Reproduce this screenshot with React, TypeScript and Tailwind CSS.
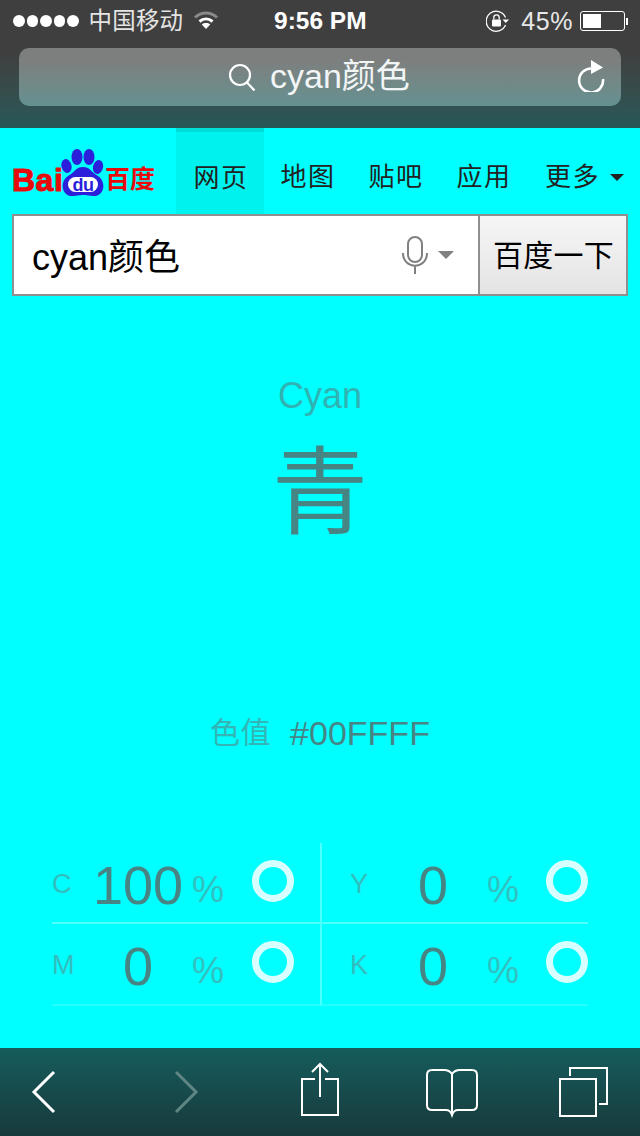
import React from "react";

const SANS = "font-['Liberation_Sans','Noto_Sans_CJK_SC',sans-serif]";

function StatusBar() {
  return (
    <div className="flex h-[40px] items-center justify-between pl-[13px] pr-[12px] pt-[2px] text-white">
      <div className="flex w-[210px] items-center">
        <div className="flex gap-[2px]">
          {[0, 1, 2, 3, 4].map((i) => (
            <span key={i} className="h-[11.5px] w-[11.5px] rounded-full bg-white" />
          ))}
        </div>
        <span className="ml-[10px] pt-[1px] text-[23.5px] leading-none tracking-[0.2px] text-[#e4e4e4]">中国移动</span>
        <svg width="26" height="20" viewBox="0 0 26 20" className="mb-[2px] ml-[10px]" fill="none">
          <path d="M2 7.500C8.500 1.500 17.500 1.500 24 7.500" stroke="#8a8a8a" strokeWidth="3" />
          <path d="M6.500 11.500C10.500 8 15.500 8 19.500 11.500" stroke="#fff" strokeWidth="3" />
          <path d="M13 19L8.800 14.500C11 12.600 15 12.600 17.200 14.500Z" fill="#fff" />
        </svg>
      </div>
      <span className="ml-[51px] text-[24.5px] font-bold leading-none">9:56 PM</span>
      <div className="ml-auto flex items-center">
        <svg width="24" height="22" viewBox="0 0 24 22" fill="none" className="ml-[1px]">
          <path d="M19.500 7.500A10 10 0 1 0 19.500 15" stroke="#fff" strokeWidth="1.300" />
          <path d="M16.500 9.500H23L19.800 13Z" fill="#fff" />
          <rect x="6" y="9.500" width="9" height="7" rx="1" fill="#fff" />
          <path d="M7.800 9.500V7.500A2.700 2.700 0 0 1 13.200 7.500V9.500" stroke="#fff" strokeWidth="1.300" />
        </svg>
        <span className="ml-[11px] text-[25px] leading-none tracking-[0.6px] text-[#e8e8e8]">45%</span>
        <div className="ml-[7px] flex items-center">
          <div className="h-[20px] w-[45px] rounded-[3px] border border-white p-[2px]">
            <div className="h-full w-[18px] bg-white" />
          </div>
          <div className="ml-[1px] h-[7px] w-[2px] bg-white" />
        </div>
      </div>
    </div>
  );
}

function AddressBar() {
  return (
    <div className="mx-[19px] mt-[8px] flex h-[58px] items-center rounded-[10px] bg-gradient-to-b from-[#7d7f7e] from-20% to-[#649191] pl-[209px] pr-[16px] text-white">
      <svg width="28" height="30" viewBox="0 0 28 30" fill="none" stroke="#fff" strokeWidth="2.200">
        <circle cx="12" cy="13" r="10" />
        <path d="M19 20.500L26.500 28.500" />
      </svg>
      <span className="mb-[3px] ml-[14px] text-[34px] leading-none text-[#f2f5f5]">cyan颜色</span>
      <svg width="28" height="32" viewBox="0 0 28 32" fill="none" className="mb-[3px] ml-auto">
        <path d="M15 8.500A12 12 0 1 0 26 19" stroke="#fff" strokeWidth="2.600" />
        <path d="M14 0L26 7.500L14 14Z" fill="#fff" />
      </svg>
    </div>
  );
}

function BaiduLogo() {
  return (
    <div className="relative h-[48px] w-[144px]">
      <span className="absolute left-0 top-[15px] text-[32px] font-bold leading-none tracking-[0.5px] text-[#e80b0b] [-webkit-text-stroke:1px_#e80b0b]">Bai</span>
      <span className="absolute left-[93px] top-[18px] text-[25px] font-bold leading-none text-[#e80b0b]">百度</span>
      <svg width="46" height="48" viewBox="0 0 46 48" className="absolute left-[49px] top-0" fill="#2b1fdc">
        <ellipse cx="5.500" cy="17" rx="5" ry="7" transform="rotate(-15 5.500 17)" />
        <ellipse cx="16" cy="8" rx="5.500" ry="8" />
        <ellipse cx="28" cy="8" rx="5.500" ry="8" />
        <ellipse cx="37" cy="18" rx="5" ry="7" transform="rotate(15 37 18)" />
        <path d="M22 18C29 18 30 23 37 27C46 33 43 47 33 47C28 47 26 46 22 46C18 46 16 47 11 47C1 47 -2 33 7 27C14 23 15 18 22 18Z" />
      </svg>
      <span className="absolute left-[56px] top-[28px] flex h-[15px] w-[30px] items-center justify-center rounded-full bg-white text-[18px] font-bold leading-none tracking-[-0.5px] text-[#2b1fdc]">
        du
      </span>
    </div>
  );
}

function NavBar() {
  const tabs = ["网页", "地图", "贴吧", "应用"];
  return (
    <div className="flex h-[86px] pl-[12px]">
      <div className="flex w-[164px] flex-col justify-end pb-[17px]">
        <BaiduLogo />
      </div>
      {tabs.map((t, i) => (
        <div
          key={t}
          className={
            i === 0
              ? "flex w-[88px] items-center justify-center border-t-[4px] border-[#00dcd8] bg-[#00f2ee] pl-[2px] pt-[10px] text-[26px] tracking-[1.500px] text-[#222]"
              : "flex w-[88px] items-center justify-center pt-[12px] text-[26px] tracking-[1.500px] text-[#222]"
          }
        >
          {t}
        </div>
      ))}
      <div className="ml-[17px] flex items-center pt-[12px] text-[26px] tracking-[1.500px] text-[#222]">
        更多
        <span className="ml-[10px] h-0 w-0 border-x-[7px] border-t-[7px] border-x-transparent border-t-[#222]" />
      </div>
    </div>
  );
}

function SearchForm() {
  return (
    <div className="mx-[12px] flex h-[82px] border-2 border-[#8f8f8f]">
      <div className="flex flex-1 items-center bg-white pl-[18px] pr-[24px]">
        <span className="pt-[5px] text-[36px] leading-none text-black">cyan颜色</span>
        <svg width="26" height="38" viewBox="0 0 26 38" fill="none" stroke="#808080" strokeWidth="2" className="ml-auto">
          <rect x="6" y="1" width="14" height="25" rx="7" />
          <path d="M1 17C1 34 25 34 25 17M13 30V38" />
        </svg>
        <span className="ml-[10px] h-0 w-0 border-x-[8px] border-t-[8px] border-x-transparent border-t-[#808080]" />
      </div>
      <div className="flex w-[148px] items-center justify-center border-l-2 border-[#8f8f8f] bg-gradient-to-b from-[#f6f6f6] to-[#e4e4e4] pl-[1px] pt-[2px] text-[30px] leading-none tracking-[0.2px] text-black">
        百度一下
      </div>
    </div>
  );
}

function CmykCell({ label, value, right, bottom }: { label: string; value: string; right?: boolean; bottom?: boolean }) {
  return (
    <div
      className={
        (right ? "pl-[28px] " : "border-r-2 border-[#4dffff] ") +
        (bottom ? "h-[82px] border-b-[#26ffff] " : "h-[81px] border-b-[#4dffff] ") +
        "flex items-center border-b-2 pt-[4px]"
      }
    >
      <span className={(right ? "w-[37px] " : "w-[40px] ") + "pb-[1px] text-[27px] leading-none text-[#33bdbd]"}>{label}</span>
      <span className="w-[92px] text-center text-[54px] leading-none text-[#478585]">{value}</span>
      <span className={(right ? "ml-[8px] w-[59px] " : "ml-[8px] w-[60px] ") + "pt-[10px] text-[36px] leading-none text-[#33c0c0]"}>%</span>
      <span className="mb-[8px] h-[42px] w-[42px] rounded-full border-[7px] border-[#d8ffff]" />
    </div>
  );
}

export default function App() {
  return (
    <div className={`flex h-[1136px] w-[640px] flex-col overflow-hidden bg-[#00ffff] ${SANS}`}>
      <div className="h-[128px] bg-gradient-to-b from-[#3f3f3f] from-40% to-[#275858]">
        <StatusBar />
        <AddressBar />
      </div>
      <NavBar />
      <SearchForm />

      <div className="mt-[79px] text-center text-[36px] leading-[42px] text-[#2fb3b3]">Cyan</div>
      <div className="mt-[20px] text-center text-[96px] leading-[112px] text-[#478585]">青</div>
      <div className="mt-[164px] flex items-center justify-center text-[34px] leading-[40px]">
        <span className="text-[30px] tracking-[0.500px] text-[#33b5b5]">色值</span>
        <span className="ml-[19px] text-[#478585]">#00FFFF</span>
      </div>

      <div className="mx-[52px] mt-[90px] grid h-[163px] grid-cols-[270px_1fr]">
        <CmykCell label="C" value="100" />
        <CmykCell label="Y" value="0" right />
        <CmykCell label="M" value="0" bottom />
        <CmykCell label="K" value="0" right bottom />
      </div>

      <div className="mt-auto flex h-[88px] items-center bg-gradient-to-b from-[#155c5c] to-[#173a3c]">
        <svg width="640" height="88" viewBox="0 0 640 88" fill="none" stroke="#fff" strokeWidth="2">
          <path d="M54 24L34 44L54 64" strokeWidth="3" />
          <path d="M176 24L196 44L176 64" strokeWidth="3" stroke="#5f8585" />
          <path d="M315 31H302V67H338V31H325" />
          <path d="M320 49V16M312 24L320 16L328 24" />
          <path d="M452 68V26C450 23 447 22 444 22H432Q427 22 427 27V57Q427 62 432 62H446C449 62 451 64 452 67C453 64 455 62 458 62H472Q477 62 477 57V27Q477 22 472 22H460C457 22 454 23 452 26" />
          <path d="M570 28V20H607V56H599" />
          <rect x="560" y="31" width="36" height="37" />
        </svg>
      </div>
    </div>
  );
}
